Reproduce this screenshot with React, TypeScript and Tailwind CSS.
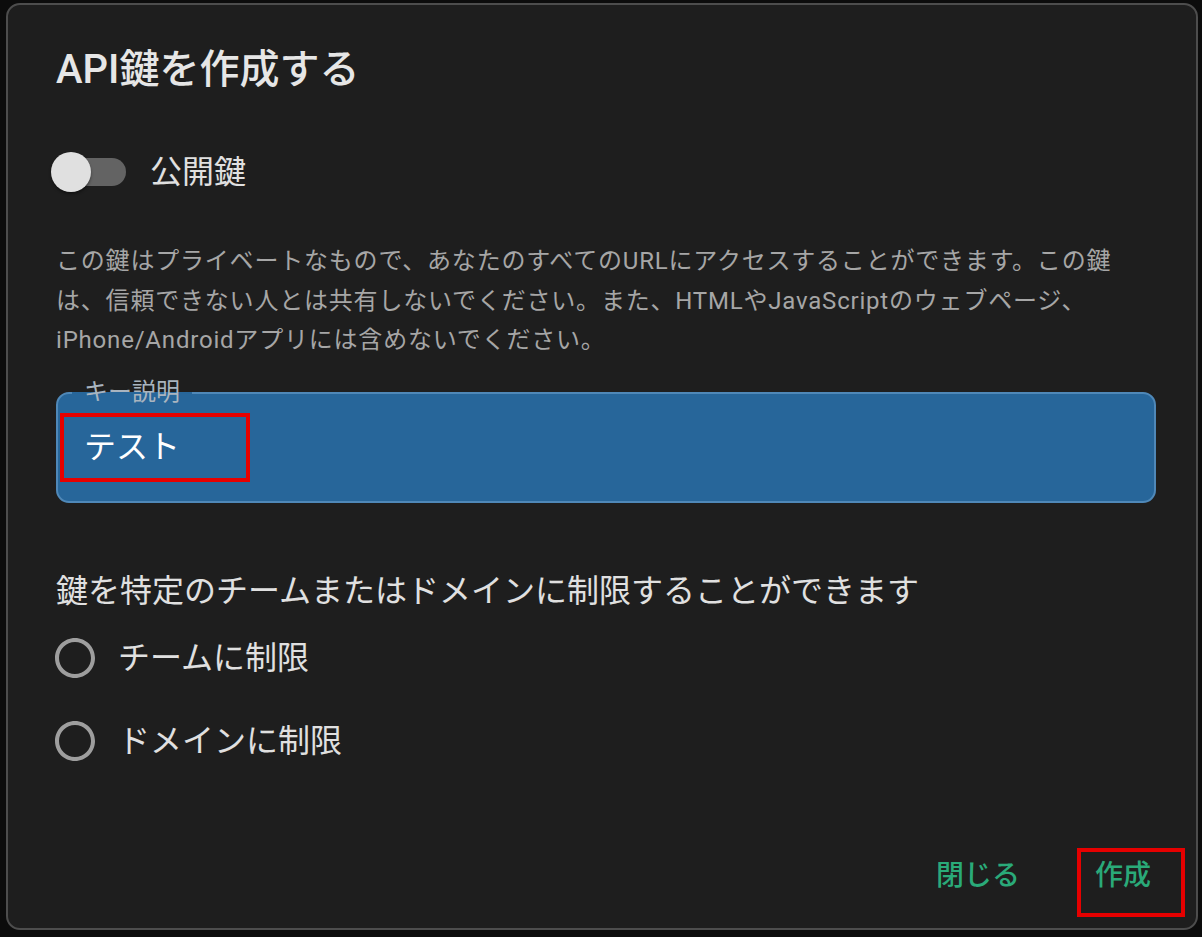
import { useState } from "react";

const font = { fontFamily: 'Roboto, "Noto Sans CJK JP", sans-serif' };

const RadioIcon = () => (
  <svg viewBox="0 0 24 24" className="w-[48px] h-[48px] fill-[#9e9e9e]">
    <path d="M12 2C6.48 2 2 6.48 2 12s4.48 10 10 10 10-4.48 10-10S17.52 2 12 2zm0 18c-4.42 0-8-3.58-8-8s3.58-8 8-8 8 3.58 8 8-3.58 8-8 8z" />
  </svg>
);

const RadioRow = ({ label }: { label: string }) => (
  <label className="flex items-center h-[48px] gap-[19px] cursor-pointer">
    <span className="-ml-[5px]">
      <RadioIcon />
    </span>
    <span className="text-[32px] leading-[48px] text-[#e0e0e0]">{label}</span>
  </label>
);

export default function App() {
  const [isPublic, setIsPublic] = useState(false);

  return (
    <div className="min-h-screen bg-[#0c0c0c] pt-[3px] pl-[6px] pr-[4px]" style={font}>
      <div className="flex flex-col h-[927px] rounded-[14px] border-2 border-[#4d4d4d] bg-[#1e1e1e]">
        <div className="flex flex-col pl-12 pr-[40px] pt-[33px]">
          <h2 className="text-[40px] leading-[64px] font-medium text-[#e6e6e6]">API鍵を作成する</h2>

          {/* switch */}
          <div className="flex items-center h-[48px] mt-[46px]">
            <button
              onClick={() => setIsPublic(!isPublic)}
              className="relative flex items-center w-[75px] h-[40px] -ml-[5px]"
            >
              <span className="absolute left-[7px] right-0 h-[28px] rounded-full bg-[#636363]" />
              <span className="relative w-[40px] h-[40px] rounded-full bg-[#e0e0e0] shadow-[0_2px_3px_rgba(0,0,0,0.4)]" />
            </button>
            <span className="ml-[24px] text-[32px] leading-[48px] text-[#e0e0e0]">公開鍵</span>
          </div>

          <p className="mt-[46px] text-[24px] leading-[39.5px] tracking-[0.8px] text-[#a6a6a6]">
            この鍵はプライベートなもので、あなたのすべてのURLにアクセスすることができます。この鍵は、信頼できない人とは共有しないでください。また、HTMLやJavaScriptのウェブページ、iPhone/Androidアプリには含めないでください。
          </p>

          {/* text field */}
          <div className="relative mt-[31px] h-[111px] rounded-[13px] border-2 border-[#4f88b8] bg-[#27669a] flex items-center pl-[26px]">
            <span className="absolute -top-[2px] left-[14px] w-[120px] h-[2px] bg-[#27669a]" />
            <span className="absolute -top-[14px] left-[26px] text-[24px] leading-[24px] text-[#a9b4bf]">
              キー説明
            </span>
            <span className="text-[32px] leading-[48px] text-white">テスト</span>
            <span className="absolute left-[2px] top-[19px] w-[190px] h-[69px] border-4 border-[#e60000]" />
          </div>

          <p className="mt-[64px] text-[32px] leading-[48px] text-[#e0e0e0]">
            鍵を特定のチームまたはドメインに制限することができます
          </p>

          <div className="flex flex-col gap-[35px] mt-[19px]">
            <RadioRow label="チームに制限" />
            <RadioRow label="ドメインに制限" />
          </div>
        </div>

        <div className="mt-auto flex justify-end items-center gap-[51px] pr-[33px] pb-[28px]">
          <button className="h-[48px] px-3 text-[28px] font-medium text-[#2aaa79]">閉じる</button>
          <button className="relative h-[48px] px-3 text-[28px] font-medium text-[#2aaa79]">
            作成
            <span className="absolute -left-[6px] -top-[4px] w-[108px] h-[69px] border-4 border-[#e60000]" />
          </button>
        </div>
      </div>
    </div>
  );
}
